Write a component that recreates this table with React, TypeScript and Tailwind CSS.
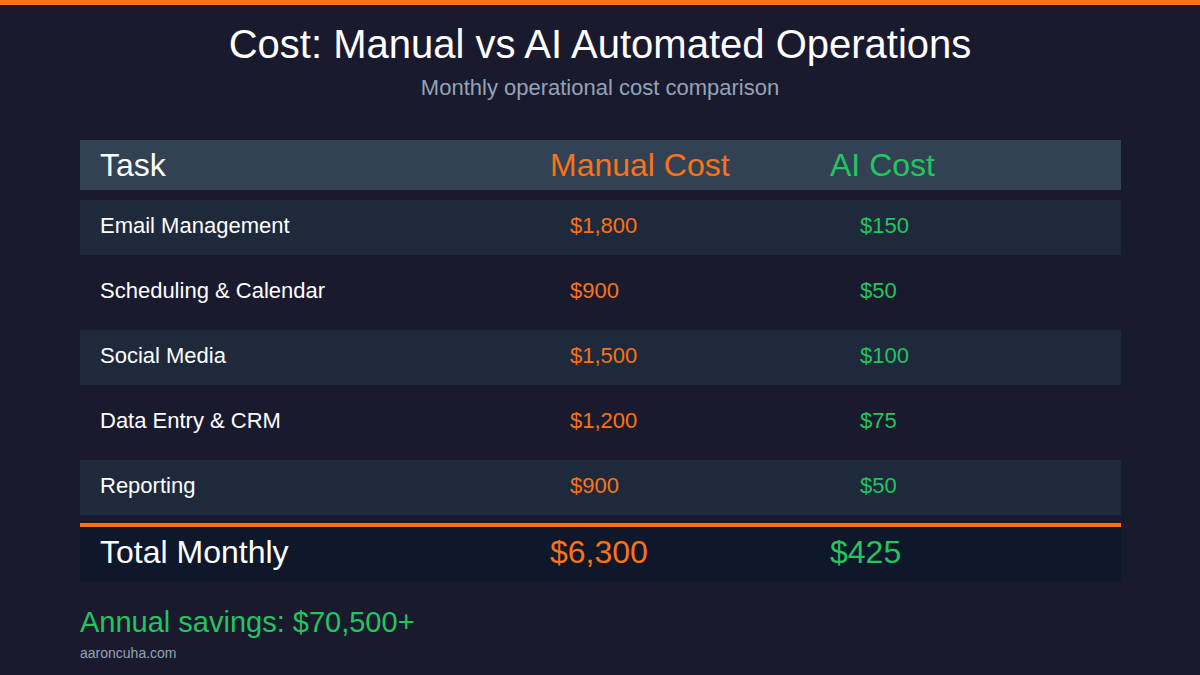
const rows = [
  { task: "Email Management", manual: "$1,800", ai: "$150" },
  { task: "Scheduling & Calendar", manual: "$900", ai: "$50" },
  { task: "Social Media", manual: "$1,500", ai: "$100" },
  { task: "Data Entry & CRM", manual: "$1,200", ai: "$75" },
  { task: "Reporting", manual: "$900", ai: "$50" },
];

export default function App() {
  return (
    <div
      className="w-[1200px] h-[675px] bg-[#1a1a2e] border-t-[5px] border-[#f97316] overflow-hidden"
      style={{ fontFamily: '"Liberation Sans", Arial, sans-serif' }}
    >
      {/* Heading */}
      <div className="pt-4 text-center">
        <h1 className="text-[40px] leading-[46px] text-white">Cost: Manual vs AI Automated Operations</h1>
        <p className="mt-2 text-[22px] leading-[25px] text-[#94a3b8]">Monthly operational cost comparison</p>
      </div>

      {/* Table */}
      <div className="mx-[80px] mt-10 w-[1041px]">
        <div className="grid grid-cols-[450px_280px_1fr] h-[50px] items-center bg-[#334155] text-[32px]">
          <div className="pl-5 text-white">Task</div>
          <div className="pl-5 text-[#f97316]">Manual Cost</div>
          <div className="pl-5 text-[#22c55e]">AI Cost</div>
        </div>

        <div className="mt-[10px] flex flex-col gap-[10px]">
          {rows.map((r, i) => (
            <div
              key={r.task}
              className={`grid grid-cols-[450px_280px_1fr] h-[55px] pb-[5px] items-center text-[22px] ${i % 2 === 0 ? "bg-[#1e293b]" : ""}`}
            >
              <div className="pl-5 text-white">{r.task}</div>
              <div className="pl-10 text-[#f97316]">{r.manual}</div>
              <div className="pl-[50px] text-[#22c55e]">{r.ai}</div>
            </div>
          ))}
        </div>

        <div className="mt-2 grid grid-cols-[450px_280px_1fr] h-[58px] pb-1 items-center bg-[#0f172a] border-t-4 border-[#f97316] text-[32px]">
          <div className="pl-5 text-white">Total Monthly</div>
          <div className="pl-5 text-[#f97316]">$6,300</div>
          <div className="pl-5 text-[#22c55e]">$425</div>
        </div>
      </div>

      {/* Footer */}
      <div className="px-[80px] mt-[25px]">
        <p className="text-[29px] leading-8 text-[#22c55e]">Annual savings: $70,500+</p>
        <p className="mt-[5px] text-sm text-[#94a3b8]">aaroncuha.com</p>
      </div>
    </div>
  );
}
